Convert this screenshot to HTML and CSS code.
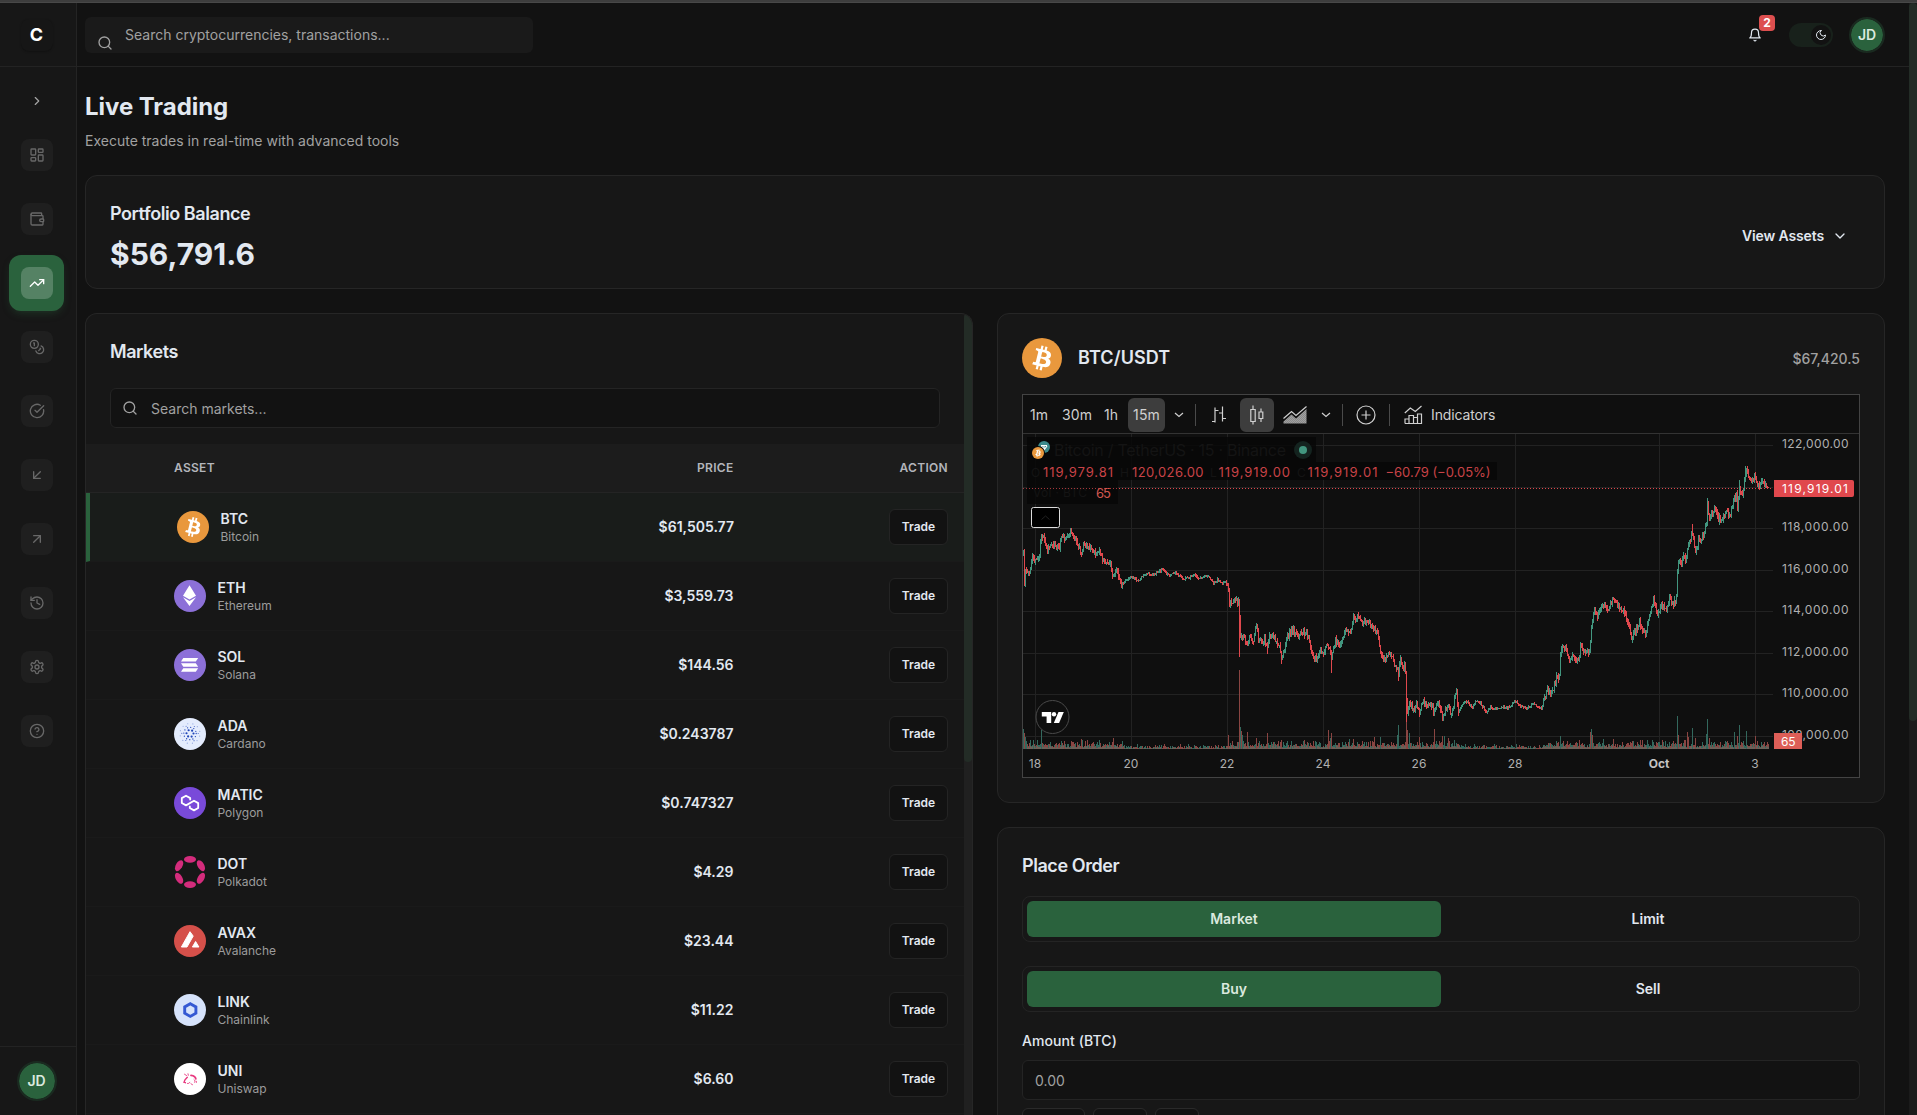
FILE: index.html
```html
<!DOCTYPE html>
<html lang="en">
<head>
<meta charset="utf-8">
<title>Live Trading</title>
<link rel="stylesheet" href="styles.css">
</head>
<body>
<svg class="defs" width="0" height="0" aria-hidden="true">
  <symbol id="btc" viewBox="0 0 32 32"><circle cx="16" cy="16" r="16" fill="#e9983d"/><path fill="#fff" d="M23.189 14.02c.314-2.096-1.283-3.223-3.465-3.975l.708-2.84-1.728-.43-.69 2.765c-.454-.114-.92-.22-1.385-.326l.695-2.783L15.596 6l-.708 2.839c-.376-.086-.746-.17-1.104-.26l.002-.009-2.384-.595-.46 1.846s1.283.294 1.256.312c.7.175.826.638.805 1.006l-.806 3.235c.048.012.11.03.18.057l-.183-.045-1.13 4.532c-.086.212-.303.531-.793.41.018.025-1.256-.313-1.256-.313l-.858 1.978 2.25.561c.418.105.828.215 1.231.318l-.715 2.872 1.727.43.708-2.84c.472.127.93.245 1.378.357l-.706 2.828 1.728.43.715-2.866c2.948.558 5.164.333 6.097-2.333.752-2.146-.037-3.385-1.588-4.192 1.13-.26 1.98-1.003 2.207-2.538zm-3.95 5.538c-.533 2.147-4.148.986-5.32.695l.95-3.805c1.172.293 4.929.872 4.37 3.11zm.535-5.569c-.487 1.953-3.495.96-4.47.717l.86-3.45c.975.243 4.118.696 3.61 2.733z"/></symbol>
  <symbol id="search" viewBox="0 0 24 24"><circle cx="11" cy="11" r="8"/><path d="m21 21-4.3-4.3"/></symbol>
</svg>
<div class="top-strip"></div>
<div class="app">
  <aside class="sidebar">
    <div class="brand"><span class="brand-mark">C</span></div>
    <nav class="nav">
      <button class="collapse"><svg class="icon s14" viewBox="0 0 24 24"><path d="m9 18 6-6-6-6"/></svg></button>
      <a class="nav-item"><span class="tile"><svg class="icon" viewBox="0 0 24 24"><rect x="3" y="3" width="7" height="9" rx="1"/><rect x="14" y="3" width="7" height="5" rx="1"/><rect x="14" y="12" width="7" height="9" rx="1"/><rect x="3" y="16" width="7" height="5" rx="1"/></svg></span></a>
      <a class="nav-item"><span class="tile"><svg class="icon" viewBox="0 0 24 24"><path d="M19 7V4a1 1 0 0 0-1-1H5a2 2 0 0 0 0 4h15a1 1 0 0 1 1 1v4h-3a2 2 0 0 0 0 4h3a1 1 0 0 0 1-1v-2a1 1 0 0 0-1-1"/><path d="M3 5v14a2 2 0 0 0 2 2h15a1 1 0 0 0 1-1v-4"/></svg></span></a>
      <a class="nav-item active"><span class="tile"><svg class="icon" viewBox="0 0 24 24"><path d="M22 7l-8.500 8.500-5-5L2 17"/><path d="M16 7h6v6"/></svg></span></a>
      <a class="nav-item"><span class="tile"><svg class="icon" viewBox="0 0 24 24"><circle cx="8" cy="8" r="6"/><path d="M18.090 10.370A6 6 0 1 1 10.340 18"/><path d="M7 6h1v4"/><path d="m16.710 13.880.7.710-2.820 2.820"/></svg></span></a>
      <a class="nav-item"><span class="tile"><svg class="icon" viewBox="0 0 24 24"><path d="M21.801 10A10 10 0 1 1 17 3.335"/><path d="m9 11 3 3L22 4"/></svg></span></a>
      <a class="nav-item"><span class="tile"><svg class="icon" viewBox="0 0 24 24"><path d="M17 7 7 17"/><path d="M17 17H7V7"/></svg></span></a>
      <a class="nav-item"><span class="tile"><svg class="icon" viewBox="0 0 24 24"><path d="M7 7h10v10"/><path d="M7 17 17 7"/></svg></span></a>
      <a class="nav-item"><span class="tile"><svg class="icon" viewBox="0 0 24 24"><path d="M3 12a9 9 0 1 0 9-9 9.750 9.750 0 0 0-6.740 2.740L3 8"/><path d="M3 3v5h5"/><path d="M12 7v5l4 2"/></svg></span></a>
      <a class="nav-item"><span class="tile"><svg class="icon" viewBox="0 0 24 24"><path d="M12.220 2h-.44a2 2 0 0 0-2 2v.18a2 2 0 0 1-1 1.730l-.43.25a2 2 0 0 1-2 0l-.15-.08a2 2 0 0 0-2.730.73l-.22.38a2 2 0 0 0 .73 2.730l.15.1a2 2 0 0 1 1 1.720v.51a2 2 0 0 1-1 1.740l-.15.09a2 2 0 0 0-.73 2.730l.22.38a2 2 0 0 0 2.730.73l.15-.08a2 2 0 0 1 2 0l.43.25a2 2 0 0 1 1 1.730V20a2 2 0 0 0 2 2h.44a2 2 0 0 0 2-2v-.18a2 2 0 0 1 1-1.730l.43-.25a2 2 0 0 1 2 0l.15.08a2 2 0 0 0 2.730-.73l.22-.39a2 2 0 0 0-.73-2.730l-.15-.08a2 2 0 0 1-1-1.740v-.5a2 2 0 0 1 1-1.740l.15-.09a2 2 0 0 0 .73-2.730l-.22-.38a2 2 0 0 0-2.730-.73l-.15.08a2 2 0 0 1-2 0l-.43-.25a2 2 0 0 1-1-1.730V4a2 2 0 0 0-2-2z"/><circle cx="12" cy="12" r="3"/></svg></span></a>
      <a class="nav-item"><span class="tile"><svg class="icon" viewBox="0 0 24 24"><circle cx="12" cy="12" r="10"/><path d="M9.090 9a3 3 0 0 1 5.830 1c0 2-3 3-3 3"/><path d="M12 17h.01"/></svg></span></a>
    </nav>
    <div class="side-foot"><span class="avatar big">JD</span></div>
  </aside>

  <div class="content">
    <header class="topbar">
      <div class="top-search"><svg class="icon" viewBox="0 0 24 24"><use href="#search"/></svg><span>Search cryptocurrencies, transactions...</span></div>
      <div class="top-actions">
        <button class="bell"><svg class="icon s14" viewBox="0 0 24 24"><path d="M6 8a6 6 0 0 1 12 0c0 7 3 9 3 9H3s3-2 3-9"/><path d="M10.300 21a1.940 1.940 0 0 0 3.400 0"/></svg><span class="badge">2</span></button>
        <div class="toggle"><span class="knob"><svg class="icon s12" viewBox="0 0 24 24"><path d="M12 3a6 6 0 0 0 9 9 9 9 0 1 1-9-9Z"/></svg></span></div>
        <span class="avatar">JD</span>
      </div>
    </header>

    <main class="main">
      <h1>Live Trading</h1>
      <p class="sub">Execute trades in real-time with advanced tools</p>

      <section class="card portfolio">
        <div>
          <h2>Portfolio Balance</h2>
          <div class="balance">$56,791.6</div>
        </div>
        <button class="view">View Assets <svg class="icon" viewBox="0 0 24 24"><path d="m6 9 6 6 6-6"/></svg></button>
      </section>

      <div class="columns">
        <section class="card markets">
          <div class="markets-body">
            <h2>Markets</h2>
            <div class="market-search"><svg class="icon" viewBox="0 0 24 24"><use href="#search"/></svg><span>Search markets...</span></div>
            <div class="row head"><span>Asset</span><span>Price</span><span>Action</span></div>
            <div class="row selected">
              <div class="asset"><svg viewBox="0 0 32 32"><use href="#btc"/></svg><div><b>BTC</b><small>Bitcoin</small></div></div>
              <span class="price">$61,505.77</span><button class="trade">Trade</button>
            </div>
            <div class="row">
              <div class="asset"><svg viewBox="0 0 32 32"><circle cx="16" cy="16" r="16" fill="#8c70d8"/><path fill="#fff" d="M15.500 5.300 22 15.800 15.500 19.500 9 15.800zM9 17.200l6.500 3.800 6.500-3.800-6.500 8.800z"/></svg><div><b>ETH</b><small>Ethereum</small></div></div>
              <span class="price">$3,559.73</span><button class="trade">Trade</button>
            </div>
            <div class="row">
              <div class="asset"><svg viewBox="0 0 32 32"><circle cx="16" cy="16" r="16" fill="#8c70d8"/><path fill="#fff" d="M9.300 9h14.900l-2.400 3.500H7zM7 14.200h14.800l2.400 3.500H9.300zM9.300 19.300h14.900l-2.400 3.500H7z"/></svg><div><b>SOL</b><small>Solana</small></div></div>
              <span class="price">$144.56</span><button class="trade">Trade</button>
            </div>
            <div class="row">
              <div class="asset"><svg viewBox="0 0 32 32"><circle cx="16" cy="16" r="16" fill="#e4ecfd"/><g fill="none" stroke="#1f45b8" stroke-linecap="round"><circle cx="16" cy="15.500" r="3.500" stroke-width="2.200" stroke-dasharray="0 3.665"/><circle cx="16" cy="15.500" r="6.200" stroke-width="1.300" stroke-dasharray="0 3.246"/><circle cx="16" cy="15.500" r="8.200" stroke-width="1.100" stroke-dasharray="0 8.587" opacity=".8"/><circle cx="16" cy="15.500" r="10" stroke-width="1.200" stroke-dasharray="0 5.236" stroke-dashoffset="2.600" opacity=".4"/></g></svg><div><b>ADA</b><small>Cardano</small></div></div>
              <span class="price">$0.243787</span><button class="trade">Trade</button>
            </div>
            <div class="row">
              <div class="asset"><svg viewBox="0 0 32 32"><circle cx="16" cy="16" r="16" fill="#794ad9"/><path fill="none" stroke="#fff" stroke-width="1.800" stroke-linejoin="round" d="M16.200 13.300v-2.200L12 8.700l-4.200 2.400v4.900l4.200 2.400 8-4.700 4.200 2.400V21L20 23.400 15.800 21v-2.200"/></svg><div><b>MATIC</b><small>Polygon</small></div></div>
              <span class="price">$0.747327</span><button class="trade">Trade</button>
            </div>
            <div class="row">
              <div class="asset"><svg viewBox="0 0 32 32"><g fill="#d42c7c"><ellipse cx="16" cy="3.400" rx="6" ry="3.300"/><ellipse cx="16" cy="28.600" rx="6" ry="3.300"/><ellipse cx="16" cy="3.400" rx="6" ry="3.300" transform="rotate(60 16 16)"/><ellipse cx="16" cy="3.400" rx="6" ry="3.300" transform="rotate(120 16 16)"/><ellipse cx="16" cy="3.400" rx="6" ry="3.300" transform="rotate(240 16 16)"/><ellipse cx="16" cy="3.400" rx="6" ry="3.300" transform="rotate(300 16 16)"/></g></svg><div><b>DOT</b><small>Polkadot</small></div></div>
              <span class="price">$4.29</span><button class="trade">Trade</button>
            </div>
            <div class="row">
              <div class="asset"><svg viewBox="0 0 32 32"><circle cx="16" cy="16" r="16" fill="#d5504a"/><path fill="#fff" stroke="#fff" stroke-linejoin="round" d="M16 6.700 7.400 22H13l6.200-10.900zM21.600 16.500 18.400 22h6.500z"/></svg><div><b>AVAX</b><small>Avalanche</small></div></div>
              <span class="price">$23.44</span><button class="trade">Trade</button>
            </div>
            <div class="row">
              <div class="asset"><svg viewBox="0 0 32 32"><circle cx="16" cy="16" r="16" fill="#d6e3fb"/><path fill="none" stroke="#3459d3" stroke-width="2.900" d="M16.300 9.700l5.600 3.200v6.300l-5.600 3.200-5.600-3.200v-6.300z"/></svg><div><b>LINK</b><small>Chainlink</small></div></div>
              <span class="price">$11.22</span><button class="trade">Trade</button>
            </div>
            <div class="row">
              <div class="asset"><svg viewBox="0 0 32 32"><circle cx="16" cy="16" r="16" fill="#fff"/><g fill="none" stroke="#e8397f" stroke-width=".9" stroke-linecap="round"><path d="M10.500 11.200l2 1.300M14 10.800l.3 1.500"/><path d="M13.300 14.200l-2.300 2.600-1 2.500 1.400.4" stroke-width="1.400"/><path d="M17 12.300c2.500.3 4.600 1.800 4.800 3.600" stroke-width="1.800"/><path d="M20 16.500c1.200.8 1.200 1.800.6 2.800"/><path d="M13.500 20.500c1.200.2 2-.4 2.300-1.200"/><path d="M17 20.800l1.500.9M22.300 18.300v1.200"/></g></svg><div><b>UNI</b><small>Uniswap</small></div></div>
              <span class="price">$6.60</span><button class="trade">Trade</button>
            </div>
          </div>
          <div class="scroll"><span></span></div>
        </section>

        <div class="right">
          <section class="card chart-card">
            <div class="pair"><svg viewBox="0 0 32 32"><use href="#btc"/></svg><h2>BTC/USDT</h2><span class="quote">$67,420.5</span></div>
            <div class="chart">
              <div class="tools">
                <span class="tf">1m</span><span class="tf t30">30m</span><span class="tf t1h">1h</span><span class="tf on">15m</span>
                <svg class="ti down" width="10" height="6" viewBox="0 0 10 6"><path d="M1 1l4 3.500L9 1"/></svg>
                <i class="sep"></i>
                <svg class="ti bars" width="16" height="18" viewBox="0 0 16 18"><path d="M4 1.500v15M1 15.500h3M4 4.500h3.500M11.500 .5v15M8 7h3.500M11.500 12.500H15"/></svg>
                <span class="candle"><svg class="ti" width="14" height="20" viewBox="0 0 14 20"><path d="M.8 4.500h4.400v12H.8zM3 .5v4M3 16.500v3M9 7h3.800v6.500H9zM11 3.500V7M11 13.500V17"/></svg></span>
                <svg class="ti area" width="24" height="18" viewBox="0 0 24 18"><defs><pattern id="dots" width="2" height="2" patternUnits="userSpaceOnUse"><rect width="1" height="1" fill="#d5d5d5"/><rect x="1" y="1" width="1" height="1" fill="#d5d5d5"/></pattern></defs><path d="M.5 12.500l8-7 4.500 4L23.500 .5"/><path d="M.5 17.500v-2l8-7 4.500 4L23.500 3v14.500z" fill="url(#dots)" stroke="none" opacity=".75"/></svg>
                <svg class="ti down d2" width="10" height="6" viewBox="0 0 10 6"><path d="M1 1l4 3.500L9 1"/></svg>
                <i class="sep s2"></i>
                <svg class="ti plus" width="20" height="20" viewBox="0 0 20 20"><circle cx="10" cy="10" r="9"/><path d="M10 5.500v9M5.500 10h9"/></svg>
                <i class="sep s3"></i>
                <svg class="ti ind" width="19" height="20" viewBox="0 0 19 20"><path d="M.8 8l5.500-5 5 3.500L17.500 1M1 18.500v-4.500h4v4.500M5 18.500v-8h4.500v8M9.500 18.500v-6h4v6M13.500 18.500v-9.500h4v9.500zM1 18.500h13"/></svg>
                <span class="ind-label">Indicators</span>
              </div>
              <svg class="plot" width="836" height="343" viewBox="0 0 836 343">
                <path class="grid" d="M12.500 0v315M108.500 0v315M204.500 0v315M300.500 0v315M396.500 0v315M492.500 0v315M636.500 0v315M732.500 0v315M0 11.500h750M0 53.500h750M0 94.500h750M0 136.500h750M0 177.500h750M0 219.500h750M0 260.500h750M0 302.500h750"/>
                <g id="volume"></g>
                <g id="candles"></g>
                <path d="M0 54.500h748" class="last-line"/>
                <g class="legend-bg"><path d="M4 3h289v25h181v18H95v24H4z"/></g>
                <g class="ghost">
                  <text x="31" y="22" textLength="232">Bitcoin / TetherUS · 15 · Binance</text>
                  <text x="8" y="43">O</text><text x="97" y="43">H</text><text x="187" y="43">L</text><text x="274" y="43">C</text>
                  <text x="10" y="63" textLength="54">Vol · BTC</text>
                </g>
                <g class="ohlc">
                  <text x="20" y="42.500" textLength="70">119,979.81</text>
                  <text x="109" y="42.500" textLength="71.500">120,026.00</text>
                  <text x="195.500" y="42.500" textLength="71.500">119,919.00</text>
                  <text x="284.500" y="42.500" textLength="70">119,919.01</text>
                  <text x="362.500" y="42.500" textLength="105">−60.79 (−0.05%)</text>
                  <text x="73" y="63.500" textLength="15" fill="#d2574f">65</text>
                </g>
                <path d="M0 54.500h95" class="last-line dim"/>
                <circle cx="21" cy="13" r="6" fill="#3b8a8c"/><path d="M18 11.500h6M21 11.500v4M18.500 12l2.500 4 3-4" stroke="#fff" stroke-width="1.200" fill="none"/>
                <circle cx="15" cy="19" r="7" fill="#0a0a0a"/><use href="#btc" x="9" y="13" width="12" height="12"/>
                <circle cx="280" cy="16" r="9" fill="#14231f"/><circle cx="280" cy="16" r="4" fill="#42967f"/>
                <rect x="8.500" y="73.500" width="28" height="20" rx="2" fill="#000" stroke="#dbdbdb"/><path d="M18.500 85.500l4-3.500 4 3.500" stroke="#222" fill="none"/>
                <circle cx="29.500" cy="283" r="16.500" fill="#0f0f0f" stroke="#4a4a4a"/>
                <g fill="#fff"><path d="M18.800 278h9.400v11h-4.600v-6.400h-4.800z"/><circle cx="31" cy="280.200" r="2.200"/><path d="M35.500 278h5.300l-4.700 11h-5.300z"/></g>
                <g class="axis">
                  <text x="759" y="14" textLength="66.500">122,000.00</text>
                  <text x="759" y="97" textLength="66.500">118,000.00</text>
                  <text x="759" y="139" textLength="66.500">116,000.00</text>
                  <text x="759" y="180" textLength="66.500">114,000.00</text>
                  <text x="759" y="222" textLength="66.500">112,000.00</text>
                  <text x="759" y="263" textLength="66.500">110,000.00</text>
                  <text x="759" y="304.500" textLength="66.500">108,000.00</text>
                </g>
                <path d="M751 46h78a2 2 0 0 1 2 2v13a2 2 0 0 1-2 2h-78z" fill="#e0484d"/><text class="tag" x="759" y="58.500" textLength="66">119,919.01</text>
                <path d="M751 299h28v16h-28z" fill="#dd5e57"/><text class="tag" x="758" y="311.500" textLength="14.500">65</text>
                <g class="axis mid">
                  <text x="12" y="334">18</text><text x="108" y="334">20</text><text x="204" y="334">22</text><text x="300" y="334">24</text><text x="396" y="334">26</text><text x="492" y="334">28</text><text x="636" y="334" font-weight="700" fill="#c4c4c4">Oct</text><text x="732" y="334">3</text>
                </g>
              </svg>
            </div>
          </section>

          <section class="card order">
            <h2>Place Order</h2>
            <div class="seg"><button class="on">Market</button><button>Limit</button></div>
            <div class="seg"><button class="on">Buy</button><button>Sell</button></div>
            <label>Amount (BTC)</label>
            <div class="field">0.00</div>
            <div class="quick"><button class="q1"></button><button class="q2"></button><button class="q3"></button></div>
          </section>
        </div>
      </div>
    </main>
  </div>
  <div class="page-scroll"><span></span></div>
</div>
<script src="chart.js"></script>
</body>
</html>
```
FILE: styles.css
```css
* { box-sizing: border-box; }
html, body { height: 100%; }
body { margin: 0; background: #121212; color: #e2e8f0; font-family: Inter, "Liberation Sans", sans-serif; font-size: 14px; line-height: 20px; overflow: hidden; }
h1, h2, p { margin: 0; }
button { font: inherit; color: inherit; background: none; border: 0; padding: 0; }
.defs { position: absolute; }
.icon { width: 16px; height: 16px; fill: none; stroke: currentColor; stroke-width: 2; stroke-linecap: round; stroke-linejoin: round; flex: none; }
.s14 { width: 14px; height: 14px; }
.s12 { width: 12px; height: 12px; }

.top-strip { height: 3px; background: #3d3d3d; border-bottom: 1px solid #484848; }
.app { display: flex; height: calc(100% - 3px); overflow: hidden; }

.sidebar { width: 77px; flex: none; background: #171717; border-right: 1px solid #242424; display: flex; flex-direction: column; }
.brand { height: 64px; border-bottom: 1px solid #232323; display: flex; align-items: center; justify-content: center; padding-right: 3px; }
.brand-mark { width: 32px; height: 32px; border-radius: 8px; display: grid; place-items: center; color: #fff; font-size: 18px; font-weight: 700; background: #161616; box-shadow: 0 1px 2px rgba(0,0,0,.25); }
.nav { flex: 1; display: flex; flex-direction: column; padding: 18px 12px 0 9px; }
.collapse { height: 32px; display: grid; place-items: center; color: #a5a5a5; margin-bottom: 10px; }
.nav-item { height: 56px; width: 55px; margin-bottom: 8px; border-radius: 12px; display: grid; place-items: center; }
.tile { width: 32px; height: 32px; border-radius: 8px; background: #1f1f1f; color: #686868; display: grid; place-items: center; margin-left: 1px; }
.nav-item.active { background: #2a623d; box-shadow: 0 4px 8px -2px rgba(42,98,61,.4); }
.active .tile { background: #558264; color: #fff; }
.side-foot { height: 69px; border-top: 1px solid #232323; display: flex; justify-content: center; padding: 14px 3px 0 0; }
.avatar { width: 36px; height: 36px; border-radius: 50%; background: #2a623d; background-clip: padding-box; border: 2px solid #1a2a20; color: #dbe9df; font-weight: 600; display: grid; place-items: center; letter-spacing: -.2px; }
.avatar.big { width: 40px; height: 40px; }

.content { flex: 1; min-width: 0; display: flex; flex-direction: column; }
.topbar { height: 64px; flex: none; border-bottom: 1px solid #232323; display: flex; align-items: center; justify-content: space-between; padding: 0 24px 0 8px; }
.top-search { width: 448px; height: 36px; border-radius: 6px; background: #1a1a1a; color: #a1a1a1; display: flex; align-items: center; gap: 12px; padding: 0 12px; }
.top-search .icon { margin-top: 17px; }
.top-actions { display: flex; align-items: center; gap: 16px; }
.bell { position: relative; width: 36px; height: 36px; display: grid; place-items: center; }
.badge { position: absolute; left: 22px; top: -2px; width: 16px; height: 16px; border-radius: 4px; background: #dd4f4f; color: #fff; font-size: 12px; font-weight: 700; line-height: 16px; text-align: center; }
.toggle { width: 44px; height: 24px; border-radius: 12px; background: #18211b; padding: 2px; display: flex; justify-content: flex-end; }
.knob { width: 20px; height: 20px; border-radius: 50%; background: #121212; display: grid; place-items: center; }

.main { flex: 1; padding: 24px 24px 0 8px; min-height: 0; overflow: hidden; }
h1 { font-size: 24px; line-height: 32px; font-weight: 700; letter-spacing: -.05px; }
.sub { margin-top: 8px; color: #a1a1a1; }
.card { background: #171717; border: 1px solid #262626; border-radius: 12px; }
h2 { font-size: 18px; line-height: 28px; font-weight: 600; letter-spacing: -.43px; }
.portfolio { margin-top: 24px; height: 114px; padding: 24px; display: flex; justify-content: space-between; align-items: center; }
.portfolio h2 { margin-top: 7px; }
.balance { font-size: 30px; line-height: 36px; font-weight: 700; margin-top: 8px; }
.view { display: flex; align-items: center; gap: 8px; font-weight: 600; padding: 0 12px 0 0; margin-top: 8px; letter-spacing: -.13px; }
.columns { display: grid; grid-template-columns: 888px 888px; gap: 24px; margin-top: 24px; align-items: start; }

.markets { height: 802px; border-bottom: 0; border-radius: 12px 12px 0 0; display: flex; overflow: hidden; }
.markets-body { flex: 1; min-width: 0; }
.markets h2 { margin: 24px 24px 0; }
.market-search { margin: 22px 24px 16px; height: 40px; border: 1px solid #242424; border-radius: 6px; background: #121212; color: #a1a1a1; display: flex; align-items: center; gap: 13px; padding: 0 12px 0 11px; }
.market-search span { padding-top: 2px; }
.row { height: 69px; border-bottom: 1px solid #1a1a1a; padding: 0 16px 0 88px; display: grid; grid-template-columns: 400px 159.5px 1fr; align-items: center; }
.row > :nth-child(n+2) { justify-self: end; }
.row.head { height: 49px; background: #1c1c1c; border-color: #242424; font-size: 12px; font-weight: 600; text-transform: uppercase; letter-spacing: .3px; color: #b3b5bb; }
.row.selected { background: #191c1a; border-left: 4px solid #2a623d; padding-left: 87px; grid-template-columns: 397px 160px 1fr; }
.asset { display: flex; align-items: center; gap: 11.5px; }
.asset svg { width: 32px; height: 32px; }
.asset b { display: block; font-weight: 600; line-height: 20px; }
.asset small { display: block; font-size: 12px; line-height: 16px; color: #9c9c9c; }
.price { font-weight: 600; }
.trade { width: 59px; height: 36px; border: 1px solid #242424; border-radius: 6px; background: #121212; font-size: 12px; font-weight: 600; }
.scroll { width: 8px; background: #202020; }
.scroll span { display: block; height: 448px; border-radius: 4px; background: #232c26; }

.right { display: flex; flex-direction: column; gap: 24px; }
.chart-card { height: 490px; padding: 24px; }
.pair { display: flex; align-items: center; height: 40px; }
.pair h2 { letter-spacing: .1px; }
.pair svg { width: 40px; height: 40px; margin-right: 16px; }
.quote { margin-left: auto; font-weight: 500; color: #a1a1a1; padding-top: 1px; }
.chart { margin-top: 16px; height: 384px; border: 1px solid #434343; background: #0f0f0f; }
.tools { height: 39px; border-bottom: 1px solid #333; display: flex; align-items: center; color: #d0d0d0; padding-top: 1px; }
.tf { margin-left: 7px; width: 20px; white-space: nowrap; letter-spacing: .15px; }
.t30 { margin-left: 12px; width: 29px; }
.t1h { margin-left: 13px; width: 16px; }
.tf.on { margin-left: 8px; width: 37px; height: 34px; border-radius: 6px; background: #3d3d3d; text-align: center; line-height: 34px; }
.ti { fill: none; stroke: #d0d0d0; stroke-width: 1.2; flex: none; }
.down { margin-left: 9px; }
.sep { width: 1px; height: 22px; background: #4a4a4a; margin-left: 11px; }
.bars { margin-left: 15px; }
.candle { margin-left: 13px; width: 34px; height: 34px; border-radius: 6px; background: #3d3d3d; display: grid; place-items: center; }
.area { margin-left: 9px; }
.d2 { margin-left: 14px; }
.plus { margin-left: 13px; }
.s2 { margin-left: 11px; }
.s3 { margin-left: 13px; }
.ind { margin-left: 14px; }
.ind-label { margin-left: 8px; margin-right: auto; letter-spacing: -.12px; white-space: nowrap; }

.plot { display: block; }
.plot text { font-size: 12px; white-space: pre; }
.grid { stroke: #222; fill: none; }
.last-line { stroke: #e0484d; stroke-dasharray: 1 2; fill: none; }
.last-line.dim { stroke: #a8363a; }
.legend-bg { fill: #080808; fill-opacity: .88; }
.ghost { fill: #141414; }
.plot .ghost text:first-child { font-size: 16px; }
.plot .ohlc text { font-size: 13px; }
.ohlc { fill: #c84347; }
.axis { fill: #b0b0b0; }
.mid { text-anchor: middle; }
.tag { fill: #fff; }
.up { stroke: #42967f; }
.dn { stroke: #e0484d; }
.v-up { stroke: #33685d; }
.v-dn { stroke: #8a4542; }
.v-base { stroke: #6b6058; }

.order { height: 420px; padding: 24px; }
.seg { height: 46px; margin-top: 16px; border: 1px solid #242424; border-radius: 8px; padding: 4px; display: grid; grid-template-columns: 1fr 1fr; font-weight: 600; letter-spacing: -.1px; }
.seg + .seg { margin-top: 24px; }
.seg .on { background: #2a623d; border-radius: 6px; color: #dbe9df; }
.order label { display: block; margin-top: 19px; font-weight: 500; letter-spacing: .08px; }
.field { margin-top: 9px; height: 40px; border: 1px solid #242424; border-radius: 6px; background: #121212; color: #a1a1a1; line-height: 40px; padding-left: 12px; }
.quick { display: flex; gap: 8px; margin-top: 8px; }
.quick button { height: 36px; border: 1px solid #2a2a2a; border-radius: 6px; background: #121212; }
.q1 { width: 63px; } .q2 { width: 54px; } .q3 { width: 44px; }

.page-scroll { width: 8px; background: #1b1b1b; }
.page-scroll span { display: block; height: 718px; border-radius: 4px; background: #232c26; }
```
FILE: chart.js
```js
// Price path as x,y pairs in plot pixels.
const path = [0,120,1,150,2,138,5,141,7,131,9,119,12,128,16,121,18,99,21,106,24,116,29,109,36,113,39,100,43,104,48,98,53,108,58,119,61,107,66,113,73,121,76,115,79,126,84,131,87,128,89,141,93,136,99,151,103,145,109,143,115,147,119,142,124,139,127,141,134,138,139,135,145,141,152,139,160,145,171,141,175,145,184,141,190,149,194,145,199,149,203,148,205,154,206,168,209,171,212,166,215,167,216,184,217,203,220,203,224,211,226,203,230,205,233,193,235,203,239,209,241,203,244,216,246,201,252,204,256,213,258,223,261,213,264,201,270,196,275,201,280,198,285,203,289,221,293,225,297,216,300,219,304,211,308,221,312,206,317,209,322,199,328,196,330,181,332,189,335,180,340,188,345,188,350,194,354,201,357,221,362,226,366,218,370,227,375,238,377,226,380,234,381,228,382,239,383,263,384,281,386,266,390,276,393,269,396,279,400,266,404,273,408,271,410,276,415,269,419,284,422,276,425,269,427,281,429,274,433,258,435,278,440,269,444,268,449,274,452,267,457,269,463,278,467,273,474,275,480,273,487,273,489,268,493,266,495,272,504,274,510,269,518,275,520,268,524,256,529,258,533,244,536,244,537,223,539,213,542,215,546,225,550,223,555,226,557,213,564,219,566,218,568,193,570,178,574,181,577,176,580,171,585,174,590,164,594,169,599,178,602,178,605,189,608,203,612,196,616,189,618,194,622,201,624,189,627,176,630,164,634,179,639,171,644,173,646,164,650,171,653,163,654,136,655,126,658,129,660,121,662,128,665,109,669,99,672,119,675,106,679,104,683,89,684,73,686,84,691,74,695,84,701,83,704,78,707,81,710,66,713,61,714,76,716,56,719,63,723,34,725,41,729,49,731,43,736,54,739,46,742,52,745,54];
// Long wicks: x -> extreme y.
const wicks = { 216: 223, 308: 239, 258: 230, 375: 247, 383: 288, 233: 189, 244: 220, 684: 64, 669: 90, 58: 123, 716: 46, 433: 254, 722: 32 };
// Volume spikes: x, height, rising(1) or falling(0).
const spikes = [0,20,1,1,16,0,2,12,1,3,8,1,10,9,1,18,19,1,41,8,0,58,10,0,90,11,0,205,14,0,209,8,0,216,79,0,217,22,1,218,18,0,219,14,1,224,17,0,233,11,0,244,16,0,258,9,0,268,8,1,293,7,1,305,19,0,307,11,1,308,16,0,330,10,0,351,12,0,357,12,1,374,14,1,375,24,1,383,28,0,384,19,0,386,16,1,396,12,0,411,20,0,419,13,0,421,13,1,425,11,0,537,13,1,544,8,0,556,9,0,567,17,0,568,20,1,569,14,0,580,10,1,590,10,0,609,8,0,624,9,1,629,9,1,654,33,1,655,14,0,664,17,0,665,12,0,669,21,1,672,11,0,683,15,1,684,30,1,686,11,0,711,17,1,714,13,0,716,24,1,723,18,1,732,13,0];

let seed = 11;
const rnd = () => ((seed = (seed * 16807) % 2147483647) / 2147483647);
let i = 0, prev = path[1], up = '', down = '', vUp = '', vDown = '', vBase = '';
const big = {};
for (let k = 0; k < spikes.length; k += 3) big[spikes[k]] = [spikes[k + 1], spikes[k + 2]];

for (let x = 0; x <= 745; x++) {
  while (i + 3 < path.length - 1 && path[i + 2] < x) i += 2;
  const t = Math.min(1, (x - path[i]) / (path[i + 2] - path[i] || 1));
  const y = path[i + 1] + (path[i + 3] - path[i + 1]) * t;
  const calm = (x > 99 && x < 203) || (x > 436 && x < 520);
  const amp = calm ? 2.4 : 6;
  const close = y + (rnd() - .5) * amp;
  let top = Math.min(prev, close) - rnd() * amp * .55;
  let bottom = Math.max(prev, close) + rnd() * amp * .55 + .5;
  if (wicks[x]) { top = Math.min(top, wicks[x]); bottom = Math.max(bottom, wicks[x]); }
  const seg = `M${x + .5} ${Math.round(top)}V${Math.max(Math.round(bottom), Math.round(top) + 1)}`;
  if (close < prev) up += seg; else down += seg;

  // Trading is heavier near the sharp moves, so the floor of the volume rises there.
  const quiet = calm || (x > 115 && x < 203);
  const base = quiet ? 1 + Math.round(rnd()) : 2 + Math.round(rnd() * 2);
  const h = base + Math.round(rnd() * rnd() * (quiet ? 4 : 7));
  vBase += `M${x + .5} 315V${315 - base}`;
  const bar = big[x] || [h, close < prev];
  const vs = `M${x + .5} ${big[x] ? 315 : 315 - base + 1}V${315 - bar[0]}`;
  if (bar[1]) vUp += vs; else vDown += vs;
  prev = close;
}
document.getElementById('candles').innerHTML = `<path class="up" d="${up}"/><path class="dn" d="${down}"/>`;
document.getElementById('volume').innerHTML = `<path class="v-base" d="${vBase}"/><path class="v-up" d="${vUp}"/><path class="v-dn" d="${vDown}"/>`;
```
